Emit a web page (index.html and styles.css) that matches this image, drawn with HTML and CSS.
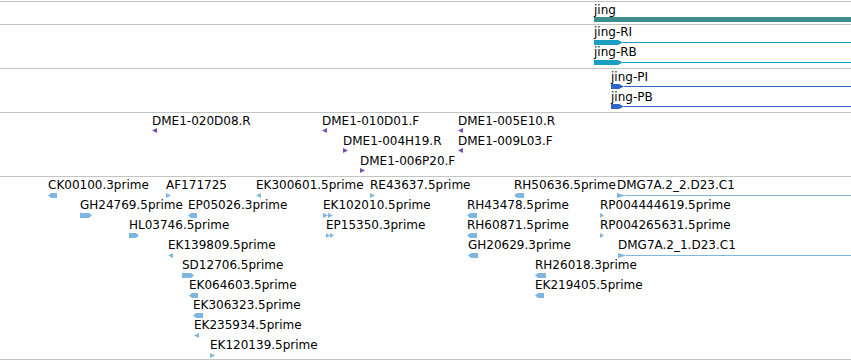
FILE: index.html
```html
<!DOCTYPE html>
<html lang="en">
<head>
    <meta charset="UTF-8">
    <title>jing region</title>
    <link rel="stylesheet" href="styles.css">
</head>
<body>

<div class="view">

    <!-- gene -->
    <div class="track gene">
        <div class="feat" style="left:594px;top:1px;">
            <span>jing</span>
            <svg width="257" height="5"><rect x="0" y="0" width="257" height="5"/></svg>
        </div>
    </div>

    <!-- transcripts -->
    <div class="track tx">
        <div class="feat" style="left:594px;top:0px;">
            <span>jing-RI</span>
            <svg width="257" height="5"><polygon points="0,0 24,0 29,2.5 24,5 0,5"/><rect x="29" y="2" width="228" height="1"/></svg>
        </div>
        <div class="feat" style="left:594px;top:20px;">
            <span>jing-RB</span>
            <svg width="257" height="5"><polygon points="0,0 24,0 29,2.5 24,5 0,5"/><rect x="29" y="2" width="228" height="1"/></svg>
        </div>
    </div>

    <!-- polypeptides -->
    <div class="track pep">
        <div class="feat" style="left:611px;top:1px;">
            <span>jing-PI</span>
            <svg width="240" height="5"><polygon points="0,0 8,0 13,2.5 8,5 0,5"/><rect x="13" y="2" width="227" height="1"/></svg>
        </div>
        <div class="feat" style="left:611px;top:21px;">
            <span>jing-PB</span>
            <svg width="240" height="5"><polygon points="0,0 8,0 13,2.5 8,5 0,5"/><rect x="13" y="2" width="227" height="1"/></svg>
        </div>
    </div>

    <!-- BAC clone ends -->
    <div class="track clone">
        <div class="feat" style="left:152px;top:1px;">
            <span>DME1-020D08.R</span>
            <svg width="5" height="5"><polygon points="0,2.5 5,0 5,5"/></svg>
        </div>
        <div class="feat" style="left:322px;top:1px;">
            <span>DME1-010D01.F</span>
            <svg width="5" height="5"><polygon points="0,2.5 5,0 5,5"/></svg>
        </div>
        <div class="feat" style="left:343px;top:21px;">
            <span>DME1-004H19.R</span>
            <svg width="5" height="5"><polygon points="0,0 5,2.5 0,5"/></svg>
        </div>
        <div class="feat" style="left:360px;top:41px;">
            <span>DME1-006P20.F</span>
            <svg width="5" height="5"><polygon points="0,0 5,2.5 0,5"/></svg>
        </div>
        <div class="feat" style="left:458px;top:1px;">
            <span>DME1-005E10.R</span>
            <svg width="5" height="5"><polygon points="0,2.5 5,0 5,5"/></svg>
        </div>
        <div class="feat" style="left:458px;top:21px;">
            <span>DME1-009L03.F</span>
            <svg width="5" height="5"><polygon points="0,2.5 5,0 5,5"/></svg>
        </div>
    </div>

    <!-- ESTs -->
    <div class="track est">
        <div class="feat" style="left:48px;top:1px;">
            <span>CK00100.3prime</span>
            <svg width="9" height="5"><polygon points="0,2.5 3,0 9,0 9,5 3,5"/></svg>
        </div>
        <div class="feat" style="left:166px;top:1px;">
            <span>AF171725</span>
            <svg width="5" height="5"><polygon points="0,0 5,2.5 0,5"/></svg>
        </div>
        <div class="feat" style="left:256px;top:1px;">
            <span>EK300601.5prime</span>
            <svg width="5" height="5"><polygon points="0,2.5 5,0 5,5"/></svg>
        </div>
        <div class="feat" style="left:370px;top:1px;">
            <span>RE43637.5prime</span>
            <svg width="5" height="5"><polygon points="0,0 5,2.5 0,5"/></svg>
        </div>
        <div class="feat" style="left:514px;top:1px;">
            <span>RH50636.5prime</span>
            <svg width="10" height="5"><polygon points="0,2.5 3,0 10,0 10,5 3,5"/></svg>
        </div>
        <div class="feat" style="left:617px;top:1px;">
            <span>DMG7A.2_2.D23.C1</span>
            <svg width="234" height="5"><polygon points="0,0 8,2.5 0,5"/><rect x="8" y="2" width="226" height="1"/></svg>
        </div>

        <div class="feat" style="left:80px;top:21px;">
            <span>GH24769.5prime</span>
            <svg width="12" height="5"><polygon points="0,0 9,0 12,2.5 9,5 0,5"/></svg>
        </div>
        <div class="feat" style="left:188px;top:21px;">
            <span>EP05026.3prime</span>
            <svg width="9" height="5"><polygon points="0,2.5 3,0 9,0 9,5 3,5"/></svg>
        </div>
        <div class="feat" style="left:323px;top:21px;">
            <span>EK102010.5prime</span>
            <svg width="10" height="5"><polygon points="0,0 5,2.5 0,5"/><polygon points="5,0 10,2.5 5,5"/></svg>
        </div>
        <div class="feat" style="left:467px;top:21px;">
            <span>RH43478.5prime</span>
            <svg width="10" height="5"><polygon points="0,2.5 3,0 10,0 10,5 3,5"/></svg>
        </div>
        <div class="feat" style="left:600px;top:21px;">
            <span>RP004444619.5prime</span>
            <svg width="4" height="5"><polygon points="0,0 4,2.5 0,5"/></svg>
        </div>

        <div class="feat" style="left:129px;top:41px;">
            <span>HL03746.5prime</span>
            <svg width="10" height="5"><polygon points="0,0 7,0 10,2.5 7,5 0,5"/></svg>
        </div>
        <div class="feat" style="left:326px;top:41px;">
            <span>EP15350.3prime</span>
            <svg width="8" height="5"><polygon points="0,0 4,2.5 0,5"/><polygon points="4,0 8,2.5 4,5"/></svg>
        </div>
        <div class="feat" style="left:467px;top:41px;">
            <span>RH60871.5prime</span>
            <svg width="10" height="5"><polygon points="0,2.5 3,0 10,0 10,5 3,5"/></svg>
        </div>
        <div class="feat" style="left:600px;top:41px;">
            <span>RP004265631.5prime</span>
            <svg width="4" height="5"><polygon points="0,0 4,2.5 0,5"/></svg>
        </div>

        <div class="feat" style="left:168px;top:61px;">
            <span>EK139809.5prime</span>
            <svg width="5" height="5"><polygon points="0,2.5 5,0 5,5"/></svg>
        </div>
        <div class="feat" style="left:468px;top:61px;">
            <span>GH20629.3prime</span>
            <svg width="10" height="5"><polygon points="0,2.5 3,0 10,0 10,5 3,5"/></svg>
        </div>
        <div class="feat" style="left:618px;top:61px;">
            <span>DMG7A.2_1.D23.C1</span>
            <svg width="233" height="5"><polygon points="0,0 8,2.5 0,5"/><rect x="8" y="2" width="225" height="1"/></svg>
        </div>

        <div class="feat" style="left:182px;top:81px;">
            <span>SD12706.5prime</span>
            <svg width="12" height="5"><polygon points="0,0 9,0 12,2.5 9,5 0,5"/></svg>
        </div>
        <div class="feat" style="left:535px;top:81px;">
            <span>RH26018.3prime</span>
            <svg width="11" height="5"><polygon points="0,2.5 3,0 11,0 11,5 3,5"/></svg>
        </div>

        <div class="feat" style="left:189px;top:101px;">
            <span>EK064603.5prime</span>
            <svg width="9" height="5"><polygon points="0,2.5 3,0 9,0 9,5 3,5"/></svg>
        </div>
        <div class="feat" style="left:535px;top:101px;">
            <span>EK219405.5prime</span>
            <svg width="9" height="5"><polygon points="0,2.5 3,0 9,0 9,5 3,5"/></svg>
        </div>

        <div class="feat" style="left:193px;top:121px;">
            <span>EK306323.5prime</span>
            <svg width="10" height="5"><polygon points="0,2.5 3,0 10,0 10,5 3,5"/></svg>
        </div>

        <div class="feat" style="left:194px;top:141px;">
            <span>EK235934.5prime</span>
            <svg width="5" height="5"><polygon points="0,2.5 5,0 5,5"/></svg>
        </div>

        <div class="feat" style="left:210px;top:161px;">
            <span>EK120139.5prime</span>
            <svg width="5" height="5"><polygon points="0,0 5,2.5 0,5"/></svg>
        </div>
    </div>

</div>

</body>
</html>
```

FILE: styles.css
```css
body {
    margin: 0;
    padding-top: 1px;
    font-family: "DejaVu Sans", sans-serif;
    font-size: 12px;
    color: #000;
    background-color: #fff;
}
.view {
    width: 851px;
    overflow: hidden;
}
.track {
    position: relative;
    border-top: 1px solid #c4c4c4;
}
.gene {
    height: 22px;
}
.tx, .pep {
    height: 43px;
}
.clone {
    height: 63px;
}
.est {
    height: 182px;
    border-bottom: 1px solid #c4c4c4;
}
.feat {
    position: absolute;
}
.feat span {
    display: block;
    line-height: 14px;
    white-space: nowrap;
}
.feat svg {
    display: block;
}
.tx svg, .est svg {
    margin-top: 1px;
}
.gene svg {
    fill: #3f8e8e;
}
.tx svg {
    fill: #1a9fc2;
}
.pep svg {
    fill: #2f66c8;
}
.clone svg {
    fill: #7452b4;
}
.est svg {
    fill: #7fb6df;
}
```
